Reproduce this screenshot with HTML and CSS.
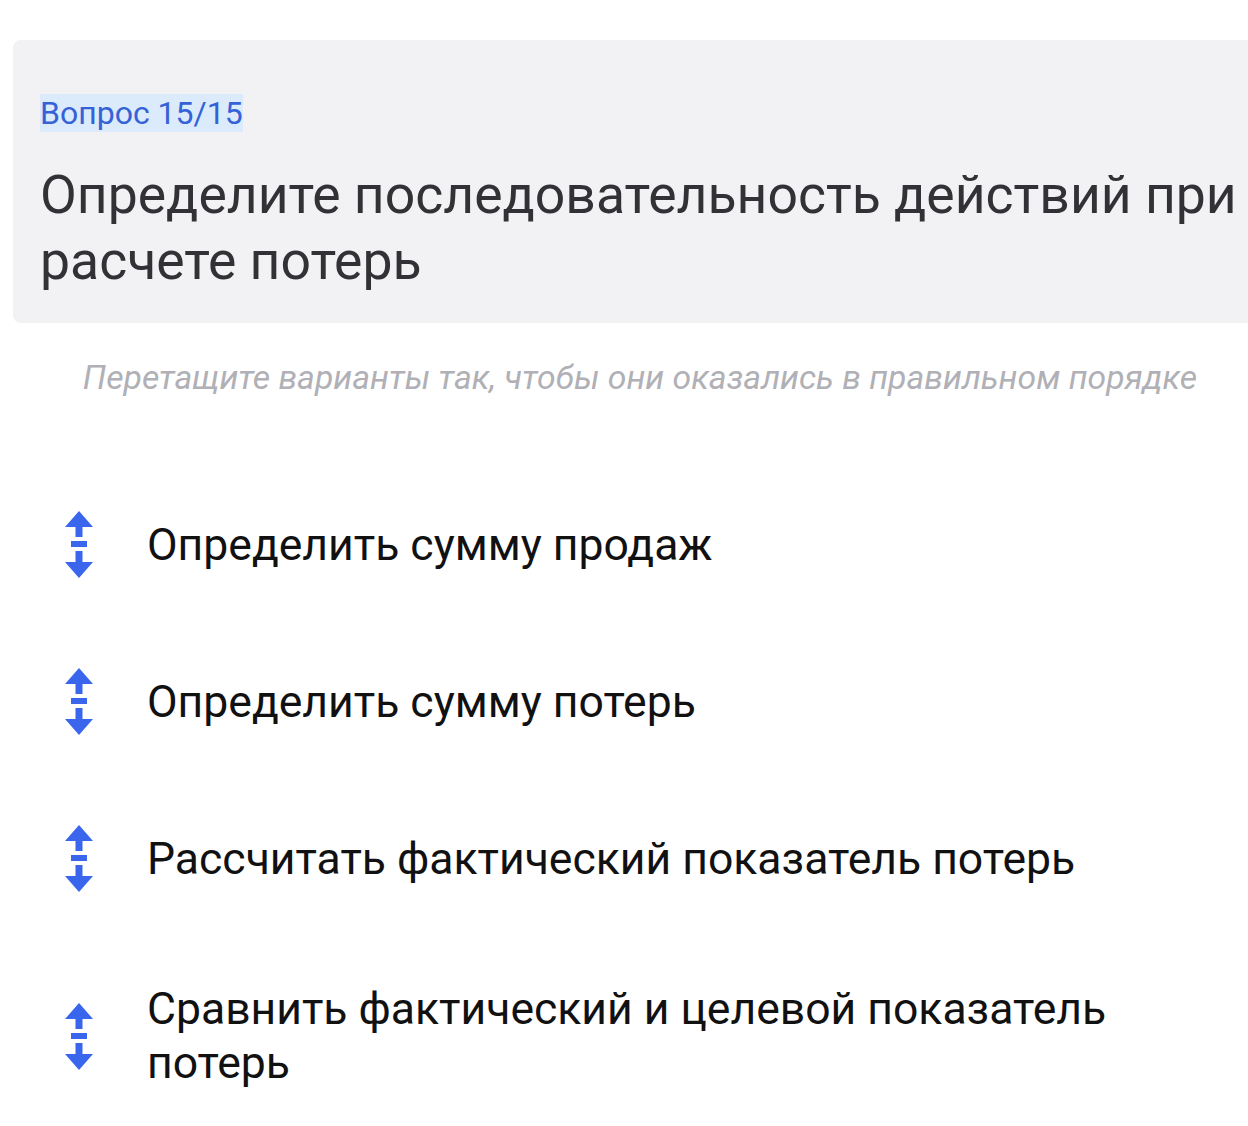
FILE: index.html
```html
<!DOCTYPE html>
<html lang="ru">
<head>
    <meta charset="UTF-8">
    <meta name="viewport" content="width=device-width, initial-scale=1.0">
    <link rel="stylesheet" href="styles.css">
</head>
<body>

    <div class="page">
        <div class="question">
            <span class="question-number">Вопрос 15/15</span>
            <h1 class="question-title">Определите последовательность действий при расчете потерь</h1>
        </div>

        <p class="hint">Перетащите варианты так, чтобы они оказались в правильном порядке</p>

        <ul class="order-list">
            <li class="order-item">
                <svg class="drag-icon" viewBox="0 0 28 67"><use href="#drag"></use></svg>
                <span class="order-text">Определить сумму продаж</span>
            </li>
            <li class="order-item">
                <svg class="drag-icon" viewBox="0 0 28 67"><use href="#drag"></use></svg>
                <span class="order-text">Определить сумму потерь</span>
            </li>
            <li class="order-item">
                <svg class="drag-icon" viewBox="0 0 28 67"><use href="#drag"></use></svg>
                <span class="order-text">Рассчитать фактический показатель потерь</span>
            </li>
            <li class="order-item">
                <svg class="drag-icon" viewBox="0 0 28 67"><use href="#drag"></use></svg>
                <span class="order-text">Сравнить фактический и целевой показатель потерь</span>
            </li>
        </ul>
    </div>

    <!-- drag handle icon -->
    <svg width="0" height="0" style="position:absolute">
        <defs>
            <g id="drag" fill="#3a66ee">
                <polygon points="14,0 28,16 0,16"></polygon>
                <rect x="10.5" y="16" width="7" height="10"></rect>
                <rect x="6" y="30" width="16" height="6"></rect>
                <rect x="10.5" y="40" width="7" height="11"></rect>
                <polygon points="0,51 28,51 14,67"></polygon>
            </g>
        </defs>
    </svg>

</body>
</html>
```

FILE: styles.css
```css
html, body {
    margin: 0;
    padding: 0;
    overflow: hidden;
    background-color: #fff;
}

body {
    font-family: Roboto, "Noto Sans", "Liberation Sans", sans-serif;
}

.page {
    width: 1254px;
    margin-left: 13px;
    padding-top: 40px;
}

.question {
    background-color: #f2f2f4;
    border-radius: 8px;
    padding: 54px 27px 29px;
}

.question-number {
    display: inline-block;
    font-size: 32px;
    line-height: 38px;
    color: #3562d6;
    background-color: #dcebfc;
}

.question-title {
    margin: 30px 0 0;
    font-size: 53.5px;
    line-height: 66px;
    font-weight: 400;
    color: #323236;
}

.hint {
    margin: 35px 0 0;
    text-align: center;
    font-size: 33.75px;
    line-height: 40px;
    font-style: italic;
    color: #b0b0b6;
}

.order-list {
    list-style: none;
    margin: 113px 0 0;
    padding: 0 120px 0 52px;
    display: flex;
    flex-direction: column;
    gap: 90px;
}

.order-item {
    display: flex;
    align-items: center;
    gap: 54px;
}

.drag-icon {
    flex: none;
    width: 28px;
    height: 67px;
}

.order-text {
    font-size: 44.5px;
    line-height: 54px;
    color: #111;
}
```
